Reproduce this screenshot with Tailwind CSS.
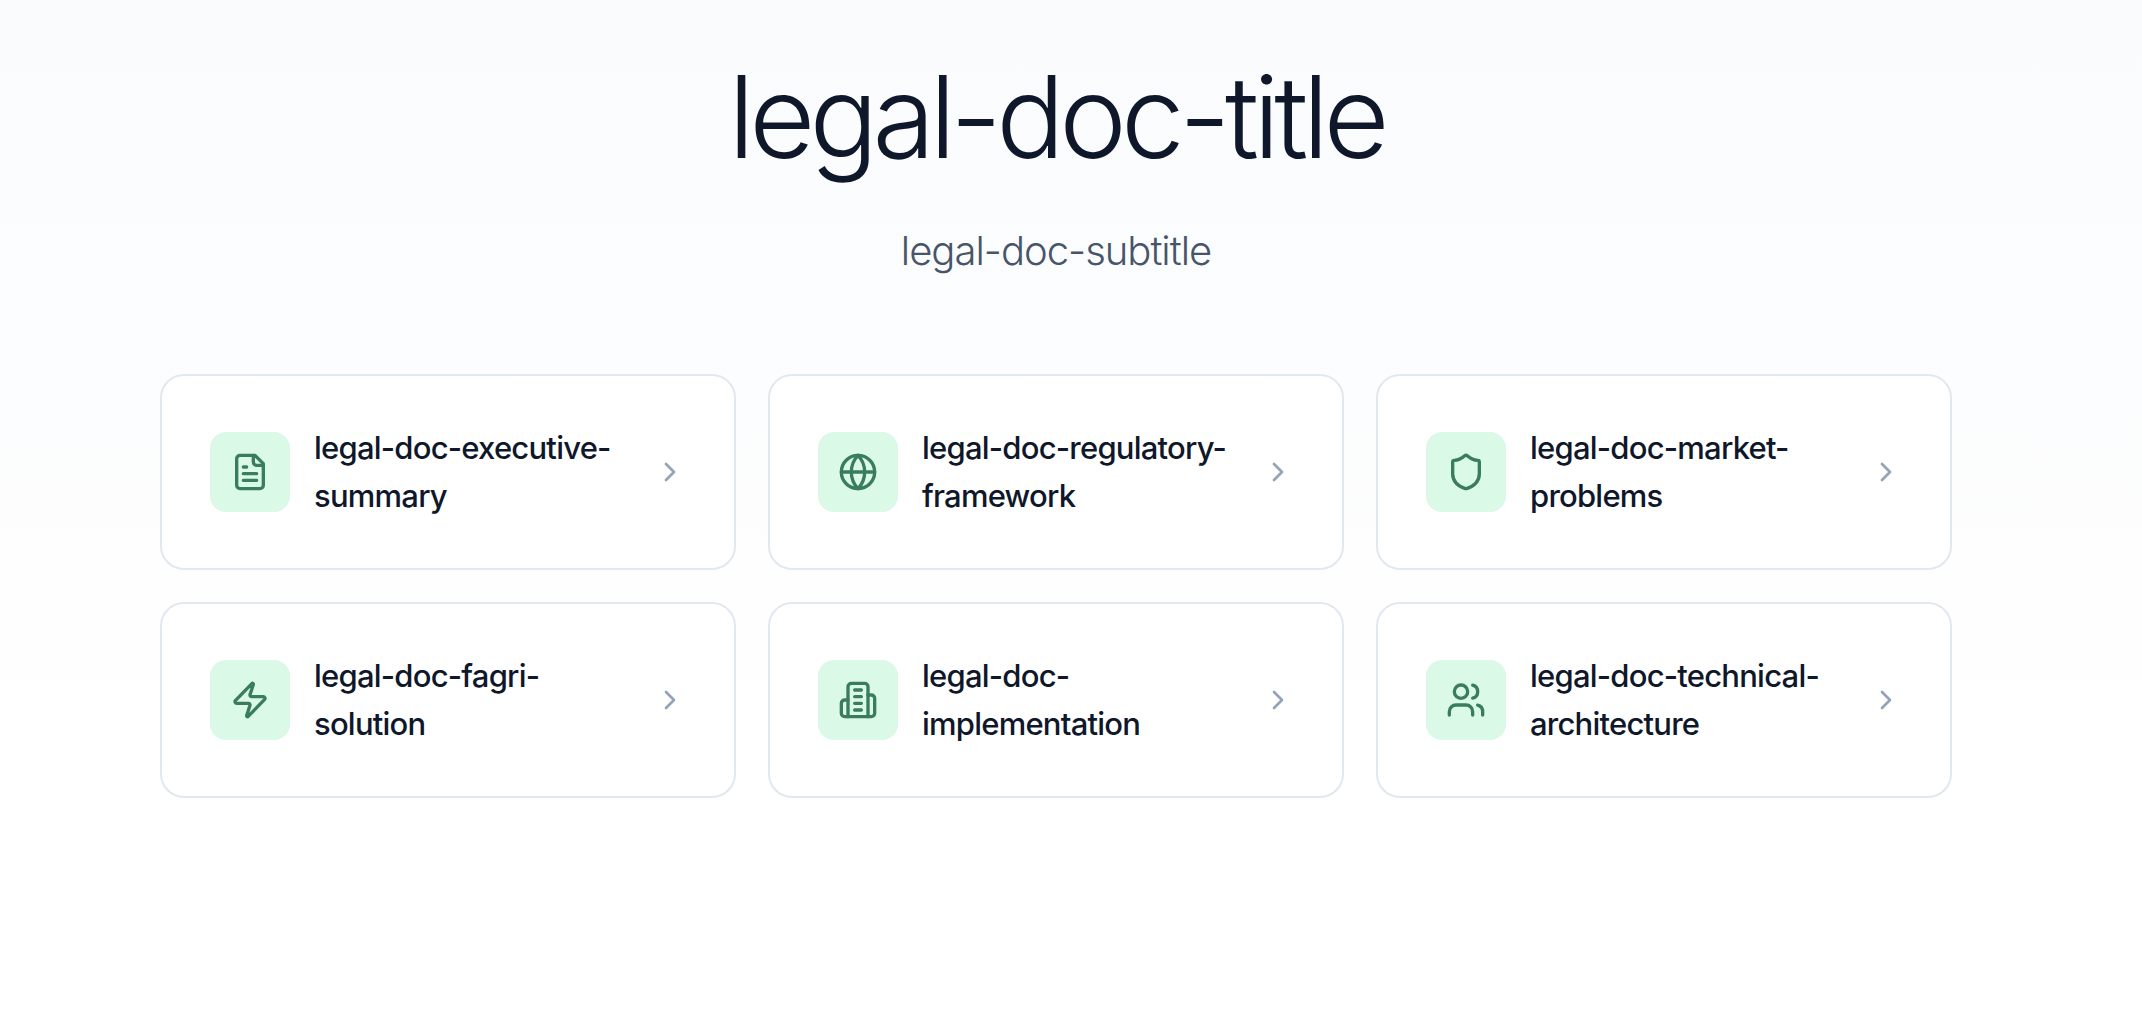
<!DOCTYPE html>
<html lang="en">
<head>
<meta charset="utf-8">
<meta name="viewport" content="width=device-width, initial-scale=1">
<title>legal-doc-title</title>
<script src="https://cdn.jsdelivr.net/npm/@tailwindcss/browser@4"></script>
</head>
<body class="min-h-screen bg-linear-to-b from-[#fafbfd] to-white to-80% pr-[30px] font-['Inter',sans-serif] text-[#0f172a] antialiased">
<main class="mx-auto max-w-[1792px] pt-[55px]">
  <header class="mb-[91px] text-center">
    <h1 class="mb-10 text-[114px] leading-[124px] font-[360] tracking-tighter">legal-doc-title</h1>
    <p class="text-[40px] leading-16 font-light tracking-tight text-[#475569]">legal-doc-subtitle</p>
  </header>
  <nav class="grid grid-cols-3 gap-8">
    <a href="#executive-summary" class="flex items-center gap-6 rounded-3xl border-2 border-[#e2e8f0] bg-white p-12">
      <span class="flex size-20 shrink-0 items-center justify-center rounded-2xl bg-[#daf9e6] text-[#3a7d5c]">
        <svg class="size-10" viewBox="0 0 24 24" fill="none" stroke="currentColor" stroke-width="2" stroke-linecap="round" stroke-linejoin="round"><path d="M15 2H6a2 2 0 0 0-2 2v16a2 2 0 0 0 2 2h12a2 2 0 0 0 2-2V7Z"/><path d="M14 2v4a2 2 0 0 0 2 2h4M10 9H8M16 13H8M16 17H8"/></svg>
      </span>
      <span class="min-w-0 flex-1 text-[31px] leading-12 font-medium tracking-tight">legal-doc-executive-summary</span>
      <svg class="size-8 shrink-0 text-[#94a3b8]" viewBox="0 0 24 24" fill="none" stroke="currentColor" stroke-width="2" stroke-linecap="round" stroke-linejoin="round"><path d="m9 18 6-6-6-6"/></svg>
    </a>
    <a href="#regulatory-framework" class="flex items-center gap-6 rounded-3xl border-2 border-[#e2e8f0] bg-white p-12">
      <span class="flex size-20 shrink-0 items-center justify-center rounded-2xl bg-[#daf9e6] text-[#3a7d5c]">
        <svg class="size-10" viewBox="0 0 24 24" fill="none" stroke="currentColor" stroke-width="2" stroke-linecap="round" stroke-linejoin="round"><circle cx="12" cy="12" r="10"/><path d="M12 2a14.500 14.500 0 0 0 0 20 14.500 14.500 0 0 0 0-20M2 12h20"/></svg>
      </span>
      <span class="min-w-0 flex-1 text-[31px] leading-12 font-medium tracking-tight">legal-doc-regulatory-framework</span>
      <svg class="size-8 shrink-0 text-[#94a3b8]" viewBox="0 0 24 24" fill="none" stroke="currentColor" stroke-width="2" stroke-linecap="round" stroke-linejoin="round"><path d="m9 18 6-6-6-6"/></svg>
    </a>
    <a href="#market-problems" class="flex items-center gap-6 rounded-3xl border-2 border-[#e2e8f0] bg-white p-12">
      <span class="flex size-20 shrink-0 items-center justify-center rounded-2xl bg-[#daf9e6] text-[#3a7d5c]">
        <svg class="size-10" viewBox="0 0 24 24" fill="none" stroke="currentColor" stroke-width="2" stroke-linecap="round" stroke-linejoin="round"><path d="M20 13c0 5-3.500 7.500-7.660 8.950a1 1 0 0 1-.67-.01C7.500 20.500 4 18 4 13V6a1 1 0 0 1 1-1c2 0 4.500-1.200 6.240-2.720a1.170 1.170 0 0 1 1.520 0C14.510 3.810 17 5 19 5a1 1 0 0 1 1 1z"/></svg>
      </span>
      <span class="min-w-0 flex-1 text-[31px] leading-12 font-medium tracking-tight">legal-doc-market-problems</span>
      <svg class="size-8 shrink-0 text-[#94a3b8]" viewBox="0 0 24 24" fill="none" stroke="currentColor" stroke-width="2" stroke-linecap="round" stroke-linejoin="round"><path d="m9 18 6-6-6-6"/></svg>
    </a>
    <a href="#fagri-solution" class="flex items-center gap-6 rounded-3xl border-2 border-[#e2e8f0] bg-white p-12">
      <span class="flex size-20 shrink-0 items-center justify-center rounded-2xl bg-[#daf9e6] text-[#3a7d5c]">
        <svg class="size-10" viewBox="0 0 24 24" fill="none" stroke="currentColor" stroke-width="2" stroke-linecap="round" stroke-linejoin="round"><path d="M4 14a1 1 0 0 1-.78-1.630l9.900-10.200a.5.5 0 0 1 .86.460l-1.920 6.020A1 1 0 0 0 13 10h7a1 1 0 0 1 .78 1.630l-9.900 10.200a.5.5 0 0 1-.86-.460l1.920-6.020A1 1 0 0 0 11 14z"/></svg>
      </span>
      <span class="min-w-0 flex-1 text-[31px] leading-12 font-medium tracking-tight">legal-doc-fagri-solution</span>
      <svg class="size-8 shrink-0 text-[#94a3b8]" viewBox="0 0 24 24" fill="none" stroke="currentColor" stroke-width="2" stroke-linecap="round" stroke-linejoin="round"><path d="m9 18 6-6-6-6"/></svg>
    </a>
    <a href="#implementation" class="flex items-center gap-6 rounded-3xl border-2 border-[#e2e8f0] bg-white p-12">
      <span class="flex size-20 shrink-0 items-center justify-center rounded-2xl bg-[#daf9e6] text-[#3a7d5c]">
        <svg class="size-10" viewBox="0 0 24 24" fill="none" stroke="currentColor" stroke-width="2" stroke-linecap="round" stroke-linejoin="round"><path d="M6 22V4a2 2 0 0 1 2-2h8a2 2 0 0 1 2 2v18Z"/><path d="M6 12H4a2 2 0 0 0-2 2v6a2 2 0 0 0 2 2h2M18 9h2a2 2 0 0 1 2 2v9a2 2 0 0 1-2 2h-2M10 6h4M10 10h4M10 14h4M10 18h4"/></svg>
      </span>
      <span class="min-w-0 flex-1 text-[31px] leading-12 font-medium tracking-tight">legal-doc-implementation</span>
      <svg class="size-8 shrink-0 text-[#94a3b8]" viewBox="0 0 24 24" fill="none" stroke="currentColor" stroke-width="2" stroke-linecap="round" stroke-linejoin="round"><path d="m9 18 6-6-6-6"/></svg>
    </a>
    <a href="#technical-architecture" class="flex items-center gap-6 rounded-3xl border-2 border-[#e2e8f0] bg-white p-12">
      <span class="flex size-20 shrink-0 items-center justify-center rounded-2xl bg-[#daf9e6] text-[#3a7d5c]">
        <svg class="size-10" viewBox="0 0 24 24" fill="none" stroke="currentColor" stroke-width="2" stroke-linecap="round" stroke-linejoin="round"><path d="M16 21v-2a4 4 0 0 0-4-4H6a4 4 0 0 0-4 4v2"/><circle cx="9" cy="7" r="4"/><path d="M22 21v-2a4 4 0 0 0-3-3.870M16 3.130a4 4 0 0 1 0 7.750"/></svg>
      </span>
      <span class="min-w-0 flex-1 text-[31px] leading-12 font-medium tracking-tight">legal-doc-technical-architecture</span>
      <svg class="size-8 shrink-0 text-[#94a3b8]" viewBox="0 0 24 24" fill="none" stroke="currentColor" stroke-width="2" stroke-linecap="round" stroke-linejoin="round"><path d="m9 18 6-6-6-6"/></svg>
    </a>
  </nav>
</main>
</body>
</html>
